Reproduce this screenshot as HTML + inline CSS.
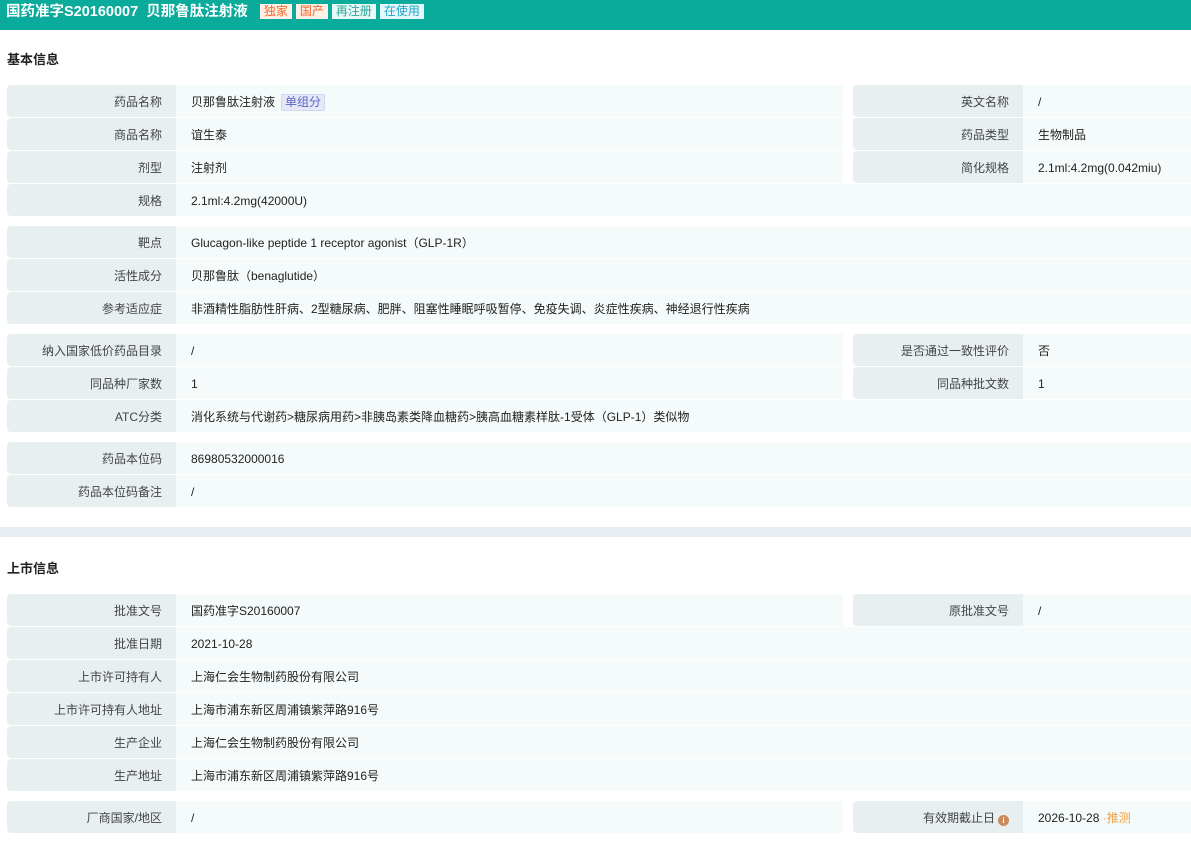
<!DOCTYPE html>
<html><head><meta charset="utf-8"><style>
*{margin:0;padding:0;box-sizing:border-box}
body{width:1191px;height:841px;overflow:hidden;background:#fff;font-family:"Liberation Sans","Noto Sans CJK SC",sans-serif;font-size:12px;color:#222;position:relative}
.hdr{position:absolute;left:0;top:0;width:1191px;height:30px;background:#0aab9b;color:#fff;font-weight:bold;font-size:14.5px;line-height:25px;padding-left:6px;white-space:nowrap}
.tag{display:inline-block;font-weight:normal;font-size:12px;line-height:15px;padding:0 4px;margin-left:4px;vertical-align:1px}
.t1{background:#fff0e6;color:#f2652a}
.t2{background:#e8f8f6;color:#2aa89a}
.t3{background:#e6f7fb;color:#1ea5c6}
.sec{position:absolute;left:7px;font-weight:bold;font-size:13px;color:#222}
.band{position:absolute;left:0;top:527px;width:1191px;height:10px;background:#e9eef3}
.l,.v{position:absolute;height:32px;line-height:34px;white-space:nowrap;overflow:hidden}
.l{background:#e8eff1;color:#444;text-align:right;padding-right:14px;width:169px;border-radius:4px 0 0 4px}
.v{background:#f5fbfb;padding-left:15px;color:#222}
.lr{left:853px;width:170px}
.ll{left:7px}
.vl{left:176px;width:667px}
.vf{left:176px;width:1015px}
.vr{left:1023px;width:168px}
.sub{display:inline-block;background:#e6e8f8;color:#5b66c7;border:1px solid #d2d6f0;line-height:15px;padding:0 3px;margin-left:6px;border-radius:2px}
.ic{display:inline-block;width:11px;height:11px;border-radius:50%;background:#c98a5c;color:#fff;font-size:8px;line-height:11px;text-align:center;font-weight:bold;vertical-align:-1px;margin-left:3px}
</style></head><body>
<div class="hdr">国药准字S20160007&nbsp;&nbsp;贝那鲁肽注射液&nbsp; <span class="tag t1">独家</span><span class="tag t1">国产</span><span class="tag t2">再注册</span><span class="tag t3">在使用</span></div>
<div class="sec" style="top:49px">基本信息</div>

<div class="l ll" style="top:85px">药品名称</div><div class="v vl" style="top:85px">贝那鲁肽注射液<span class="sub">单组分</span></div>
<div class="l lr" style="top:85px">英文名称</div><div class="v vr" style="top:85px">/</div>
<div class="l ll" style="top:118px">商品名称</div><div class="v vl" style="top:118px">谊生泰</div>
<div class="l lr" style="top:118px">药品类型</div><div class="v vr" style="top:118px">生物制品</div>
<div class="l ll" style="top:151px">剂型</div><div class="v vl" style="top:151px">注射剂</div>
<div class="l lr" style="top:151px">简化规格</div><div class="v vr" style="top:151px">2.1ml:4.2mg(0.042miu)</div>
<div class="l ll" style="top:184px">规格</div><div class="v vf" style="top:184px">2.1ml:4.2mg(42000U)</div>

<div class="l ll" style="top:226px">靶点</div><div class="v vf" style="top:226px">Glucagon-like peptide 1 receptor agonist（GLP-1R）</div>
<div class="l ll" style="top:259px">活性成分</div><div class="v vf" style="top:259px">贝那鲁肽（benaglutide）</div>
<div class="l ll" style="top:292px">参考适应症</div><div class="v vf" style="top:292px">非酒精性脂肪性肝病、2型糖尿病、肥胖、阻塞性睡眠呼吸暂停、免疫失调、炎症性疾病、神经退行性疾病</div>

<div class="l ll" style="top:334px">纳入国家低价药品目录</div><div class="v vl" style="top:334px">/</div>
<div class="l lr" style="top:334px">是否通过一致性评价</div><div class="v vr" style="top:334px">否</div>
<div class="l ll" style="top:367px">同品种厂家数</div><div class="v vl" style="top:367px">1</div>
<div class="l lr" style="top:367px">同品种批文数</div><div class="v vr" style="top:367px">1</div>
<div class="l ll" style="top:400px">ATC分类</div><div class="v vf" style="top:400px">消化系统与代谢药&gt;糖尿病用药&gt;非胰岛素类降血糖药&gt;胰高血糖素样肽-1受体（GLP-1）类似物</div>

<div class="l ll" style="top:442px">药品本位码</div><div class="v vf" style="top:442px">86980532000016</div>
<div class="l ll" style="top:475px">药品本位码备注</div><div class="v vf" style="top:475px">/</div>

<div class="band"></div>
<div class="sec" style="top:558px">上市信息</div>

<div class="l ll" style="top:594px">批准文号</div><div class="v vl" style="top:594px">国药准字S20160007</div>
<div class="l lr" style="top:594px">原批准文号</div><div class="v vr" style="top:594px">/</div>
<div class="l ll" style="top:627px">批准日期</div><div class="v vf" style="top:627px">2021-10-28</div>
<div class="l ll" style="top:660px">上市许可持有人</div><div class="v vf" style="top:660px">上海仁会生物制药股份有限公司</div>
<div class="l ll" style="top:693px">上市许可持有人地址</div><div class="v vf" style="top:693px">上海市浦东新区周浦镇紫萍路916号</div>
<div class="l ll" style="top:726px">生产企业</div><div class="v vf" style="top:726px">上海仁会生物制药股份有限公司</div>
<div class="l ll" style="top:759px">生产地址</div><div class="v vf" style="top:759px">上海市浦东新区周浦镇紫萍路916号</div>

<div class="l ll" style="top:801px">厂商国家/地区</div><div class="v vl" style="top:801px">/</div>
<div class="l lr" style="top:801px">有效期截止日<span class="ic">i</span></div><div class="v vr" style="top:801px">2026-10-28 <span style="color:#f5a03a">·推测</span></div>
</body></html>
